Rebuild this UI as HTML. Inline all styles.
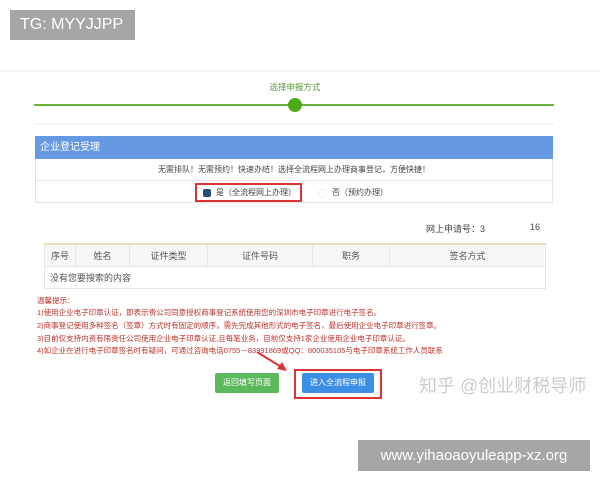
<!DOCTYPE html>
<html><head><meta charset="utf-8"><style>
*{margin:0;padding:0;box-sizing:border-box}
body{width:600px;height:480px;background:#fff;position:relative;overflow:hidden;font-family:"Liberation Sans","Noto Sans CJK SC",sans-serif}
.a{position:absolute}
.tg{left:10px;top:10px;width:125px;height:30px;background:#a6a6a6;color:#fff;font-size:16px;line-height:30px;padding-left:10px}
.sep{left:0;top:70px;width:600px;height:2px;background:#f6f6f6}
.t9{font-size:9px;color:#444}
td,th{border:1px solid #e6e6e6;font-size:9px;color:#555;font-weight:normal;text-align:center}
.tip{left:37px;font-size:7.5px;color:#c0302a;white-space:nowrap}
</style></head><body>
<div class="a tg">TG: MYYJJPP</div>
<div class="a sep"></div>
<div class="a t9" style="left:245px;top:81px;width:100px;text-align:center;color:#5a9a3a;font-size:8.5px">选择申报方式</div>
<div class="a" style="left:34px;top:104px;width:520px;height:2px;background:#6cb33e"></div>
<div class="a" style="left:288px;top:98px;width:14px;height:14px;border-radius:50%;background:#4caa14"></div>
<div class="a" style="left:34px;top:123px;width:520px;height:2px;background:#f6f6f6"></div>
<div class="a" style="left:35px;top:136px;width:518px;height:67px;border:1px solid #e4e4e4"></div>
<div class="a" style="left:35px;top:136px;width:518px;height:23px;background:#6599e2;color:#fff;font-size:10px;line-height:23px;padding-left:5px">企业登记受理</div>
<div class="a t9" style="left:35px;top:159px;width:518px;height:22px;line-height:22px;text-align:center;border-bottom:1px solid #e6e6e6;font-size:8px">无需排队！无需预约！快速办结！选择全流程网上办理商事登记，方便快捷！</div>
<div class="a" style="left:195px;top:183px;width:107px;height:19px;border:2px solid #d33"></div>
<div class="a" style="left:203px;top:189px;width:8px;height:8px;border-radius:2px;background:#2a4a7a"></div>
<div class="a t9" style="left:216px;top:187px;font-size:8px">是（全流程网上办理）</div>
<div class="a" style="left:318px;top:189px;width:9px;height:9px;border-radius:50%;border:1px solid #eee"></div>
<div class="a t9" style="left:332px;top:187px;font-size:8px">否（预约办理）</div>
<div class="a t9" style="left:426px;top:222px">网上申请号：3</div>
<div class="a t9" style="left:530px;top:222px">16</div>
<table class="a" style="left:44px;top:243px;width:502px;border-collapse:collapse;border-top:2px solid #f0dcb8">
<tr style="background:#f7f7f7;height:22px"><th style="width:31px">序号</th><th style="width:54px">姓名</th><th style="width:78px">证件类型</th><th style="width:105px">证件号码</th><th style="width:77px">职务</th><th>签名方式</th></tr>
<tr style="height:22px"><td colspan="6" style="text-align:left;padding-left:5px">没有您要搜索的内容</td></tr>
</table>
<div class="a tip" style="top:295px">温馨提示：</div>
<div class="a tip" style="top:307px">1)使用企业电子印章认证，即表示贵公司同意授权商事登记系统使用您的深圳市电子印章进行电子签名。</div>
<div class="a tip" style="top:320px">2)商事登记使用多种签名（签章）方式时有固定的顺序，需先完成其他形式的电子签名，最后使用企业电子印章进行签章。</div>
<div class="a tip" style="top:333px">3)目前仅支持内资有限责任公司使用企业电子印章认证,且每笔业务，目前仅支持1家企业使用企业电子印章认证。</div>
<div class="a tip" style="top:345px">4)如企业在进行电子印章签名时有疑问，可通过咨询电话0755－83991869或QQ：800035105与电子印章系统工作人员联系</div>
<svg class="a" style="left:255px;top:350px" width="40" height="25"><line x1="2" y1="2" x2="28" y2="18" stroke="#d33" stroke-width="2"/><polygon points="32,21 22,19 27,12" fill="#d33"/></svg>
<div class="a" style="left:215px;top:373px;width:64px;height:20px;background:#5cb85c;border-radius:2px;color:#fff;font-size:8px;line-height:20px;text-align:center">返回填写页面</div>
<div class="a" style="left:294px;top:369px;width:88px;height:30px;border:2px solid #d33"></div>
<div class="a" style="left:302px;top:373px;width:72px;height:20px;background:#3d8fe6;border-radius:2px;color:#fff;font-size:8px;line-height:20px;text-align:center">进入全流程申报</div>
<div class="a" style="left:419px;top:372px;font-size:18px;color:#ccc;white-space:nowrap">知乎 @创业财税导师</div>
<div class="a" style="left:358px;top:440px;width:232px;height:31px;background:#a6a6a6;color:#fff;font-size:15px;line-height:31px;text-align:center">www.yihaoaoyuleapp-xz.org</div>
</body></html>
